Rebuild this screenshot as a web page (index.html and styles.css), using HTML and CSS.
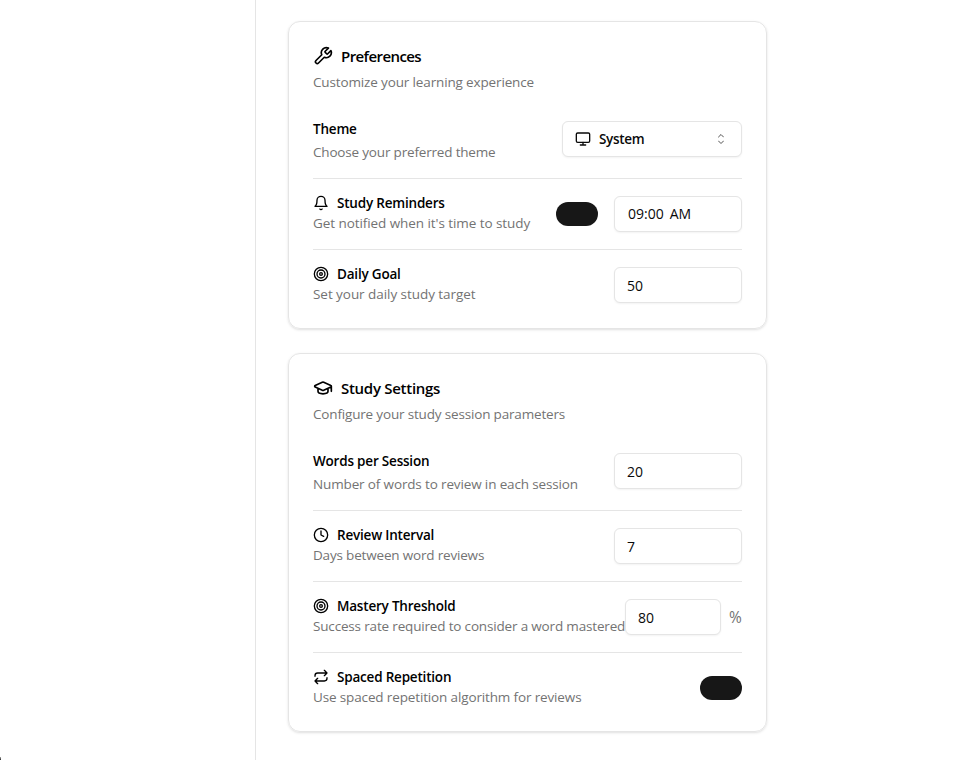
FILE: index.html
```html
<!DOCTYPE html>
<html lang="en">
<head>
<meta charset="utf-8">
<title>Settings</title>
<link rel="stylesheet" href="styles.css">
</head>
<body>
<div class="app">
  <aside class="sidebar"></aside>
  <main class="content">
    <section class="card">
      <header class="card-header">
        <h2 class="card-title t-preferences"><svg class="icon-lg" viewBox="0 0 24 24"><path d="M14.7 6.3a1 1 0 0 0 0 1.4l1.6 1.6a1 1 0 0 0 1.4 0l3.77-3.77a6 6 0 0 1-7.94 7.94l-6.91 6.91a2.12 2.12 0 0 1-3-3l6.91-6.91a6 6 0 0 1 7.94-7.94l-3.76 3.76z"/></svg><span>Preferences</span></h2>
        <p class="desc d-customize">Customize your learning experience</p>
      </header>
      <div class="row first">
        <div class="text"><h3 class="label"><span>Theme</span></h3><p class="desc d-theme">Choose your preferred theme</p></div>
        <button class="field select"><svg class="icon" viewBox="0 0 24 24"><rect width="20" height="14" x="2" y="3" rx="2"/><path d="M8 21h8M12 17v4"/></svg><span class="select-value">System</span><svg class="chevrons" viewBox="0 0 24 24"><path d="m7 16 5 5 5-5M7 8l5-5 5 5"/></svg></button>
      </div>
      <div class="row">
        <div class="text"><h3 class="label"><svg class="icon" viewBox="0 0 24 24"><path d="M6 8a6 6 0 0 1 12 0c0 7 3 9 3 9H3s3-2 3-9M10.3 21a1.94 1.94 0 0 0 3.4 0"/></svg><span>Study Reminders</span></h3><p class="desc d-reminders">Get notified when it's time to study</p></div>
        <div class="controls"><span class="switch"></span><div class="field time"><span>09:00</span><span>AM</span></div></div>
      </div>
      <div class="row">
        <div class="text"><h3 class="label"><svg class="icon" viewBox="0 0 24 24"><circle cx="12" cy="12" r="10"/><circle cx="12" cy="12" r="6"/><circle cx="12" cy="12" r="2"/></svg><span>Daily Goal</span></h3><p class="desc d-goal">Set your daily study target</p></div>
        <div class="field number">50</div>
      </div>
    </section>
    <section class="card">
      <header class="card-header">
        <h2 class="card-title t-study"><svg class="icon-lg" viewBox="0 0 24 24"><path d="M21.42 10.922a1 1 0 0 0-.019-1.838L12.83 5.18a2 2 0 0 0-1.66 0L2.6 9.08a1 1 0 0 0 0 1.832l8.57 3.908a2 2 0 0 0 1.66 0zM22 10v6M6 12.5V16a6 3 0 0 0 12 0v-3.5"/></svg><span>Study Settings</span></h2>
        <p class="desc d-configure">Configure your study session parameters</p>
      </header>
      <div class="row first">
        <div class="text"><h3 class="label"><span>Words per Session</span></h3><p class="desc d-words">Number of words to review in each session</p></div>
        <div class="field number">20</div>
      </div>
      <div class="row">
        <div class="text"><h3 class="label"><svg class="icon" viewBox="0 0 24 24"><circle cx="12" cy="12" r="10"/><path d="M12 6v6l4 2"/></svg><span>Review Interval</span></h3><p class="desc d-days">Days between word reviews</p></div>
        <div class="field number">7</div>
      </div>
      <div class="row">
        <div class="text"><h3 class="label"><svg class="icon" viewBox="0 0 24 24"><circle cx="12" cy="12" r="10"/><circle cx="12" cy="12" r="6"/><circle cx="12" cy="12" r="2"/></svg><span>Mastery Threshold</span></h3><p class="desc d-success">Success rate required to consider a word mastered</p></div>
        <div class="controls percent"><div class="field number narrow">80</div><span class="unit">%</span></div>
      </div>
      <div class="row">
        <div class="text"><h3 class="label"><svg class="icon" viewBox="0 0 24 24"><path d="m17 2 4 4-4 4M3 11v-1a4 4 0 0 1 4-4h14M7 22l-4-4 4-4M21 13v1a4 4 0 0 1-4 4H3"/></svg><span>Spaced Repetition</span></h3><p class="desc d-spaced">Use spaced repetition algorithm for reviews</p></div>
        <div class="controls"><span class="switch"></span></div>
      </div>
    </section>
  </main>
  <span class="corner-badge"></span>
</div>
</body>
</html>
```
FILE: styles.css
```css
* { box-sizing: border-box; margin: 0; }
body { background: #fff; color: #0a0a0a; font: 14px/20px "Open Sans", "Noto Sans", sans-serif; overflow: hidden; }
.app { display: flex; height: 760px; position: relative; }
.sidebar { width: 256px; border-right: 1px solid #e5e5e5; flex: none; }
.content { padding: 21px 0 0 32px; display: flex; flex-direction: column; gap: 24px; }
.card { width: 479px; border: 1px solid #e5e5e5; border-radius: 12px; padding: 24px; box-shadow: 0 1px 3px rgba(0,0,0,.1), 0 1px 2px -1px rgba(0,0,0,.1); }
.card-header { height: 70px; display: flex; flex-direction: column; gap: 6px; }
.card-title { display: flex; align-items: center; gap: 8px; height: 20px; font-size: 15px; font-weight: 600; color: #000; white-space: nowrap; }
.t-preferences { letter-spacing: -.58px; }
.t-study { letter-spacing: -.28px; }
svg { fill: none; stroke: currentColor; stroke-width: 2; stroke-linecap: round; stroke-linejoin: round; flex: none; }
.icon-lg { width: 20px; height: 20px; }
.icon { width: 16px; height: 16px; }
.desc { color: #737373; white-space: nowrap; font-size: 13.5px; letter-spacing: -.14px; }
.d-theme { letter-spacing: -.18px; }
.d-reminders { letter-spacing: -.07px; }
.d-goal { letter-spacing: -.05px; }
.d-configure { letter-spacing: -.17px; }
.d-success { letter-spacing: -.17px; }
.d-days { letter-spacing: -.18px; }
.row { display: flex; justify-content: space-between; border-top: 1px solid #e5e5e5; height: 71px; padding-top: 17px; }
.row:last-child { height: 55px; }
.row.first { border-top: 0; height: 62px; padding-top: 5px; }
.text { margin-top: -3px; width: 0; }
.first .text { margin-top: -2px; }
.label { display: flex; align-items: center; gap: 8px; font-size: 13.5px; font-weight: 600; color: #000; letter-spacing: -.2px; white-space: nowrap; height: 20px; }
.first .label { margin-bottom: 3px; }
.field { height: 36px; border: 1px solid #e5e5e5; border-radius: 6px; background: #fff; box-shadow: 0 1px 2px rgba(0,0,0,.05); display: flex; align-items: center; }
.select { width: 180px; padding: 0 12px; color: inherit; font: inherit; font-size: 13.5px; font-weight: 600; letter-spacing: -.3px; }
.select-value { margin-left: 8px; }
.chevrons { width: 12px; height: 12px; margin-left: auto; margin-right: 2px; opacity: .7; }
.number { width: 128px; padding: 2px 12px 0; }
.time { width: 128px; padding: 0 13px; gap: 6px; }
.narrow { width: 96px; }
.controls { display: flex; align-items: center; height: 36px; gap: 16px; }
.percent { gap: 8px; }
.unit { color: #737373; width: 13px; font-size: 15.5px; }
.switch { width: 42px; height: 24px; border-radius: 12px; background: #171717; }
.corner-badge { position: absolute; left: 0; bottom: 0; width: 1px; height: 3px; background: linear-gradient(#aaa, #222); }
```
